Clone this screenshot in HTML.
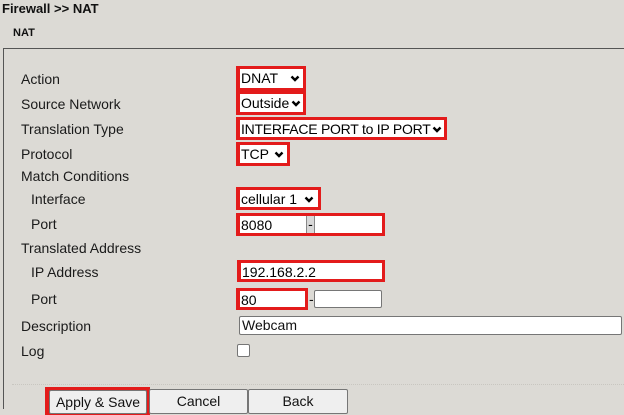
<!DOCTYPE html>
<html style="overflow:hidden;height:415px"><head><style>
body{margin:0;width:624px;height:415px;background:#dcdad5;font-family:"Liberation Sans",Arial,sans-serif;position:relative;overflow:hidden;color:#111}
.a{position:absolute;white-space:nowrap}
.l{font-size:14px;color:#1a1a1a}
.r{position:absolute;background:#e31b1b}
.r>div{position:absolute;left:4px;top:3px;right:3px;bottom:3px;background:#fff;font-size:14px;line-height:18px;padding-left:1px;color:#000;white-space:nowrap;overflow:hidden}
.ch{position:absolute;right:2px;top:6px;width:10px;height:7px;background:#fff}
.btn{position:absolute;background:#efefef;border:1px solid #767676;border-radius:2px;font-size:14px;text-align:center;line-height:22px;box-sizing:border-box}
.in{position:absolute;background:#fff;border:1px solid #767676;border-radius:2px;box-sizing:border-box;font-size:14px;line-height:16px;padding-left:2px}
</style></head><body>
<div class="a" style="left:2px;top:1px;font-size:13px;font-weight:bold">Firewall &gt;&gt; NAT</div>
<div class="a" style="left:13px;top:27px;font-size:11px;font-weight:bold">NAT</div>
<div style="position:absolute;left:3px;top:48px;width:640px;height:360px;border:1px solid #555;border-right:none;border-bottom:none"></div>
<div style="position:absolute;left:12px;top:384px;width:612px;border-top:1px dotted #c8c6c0"></div>

<div class="a l" style="left:21px;top:71px">Action</div>
<div class="a l" style="left:21px;top:96px">Source Network</div>
<div class="a l" style="left:21px;top:121px">Translation Type</div>
<div class="a l" style="left:21px;top:146px">Protocol</div>
<div class="a l" style="left:21px;top:168px">Match Conditions</div>
<div class="a l" style="left:31px;top:191px">Interface</div>
<div class="a l" style="left:31px;top:216px">Port</div>
<div class="a l" style="left:21px;top:240px">Translated Address</div>
<div class="a l" style="left:31px;top:264px">IP Address</div>
<div class="a l" style="left:31px;top:291px">Port</div>
<div class="a l" style="left:21px;top:318px">Description</div>
<div class="a l" style="left:21px;top:343px">Log</div>

<svg width="0" height="0" style="position:absolute"><defs><path id="cv" d="M1.5 1.5L5 5L8.5 1.5" fill="none" stroke="#000" stroke-width="2.4"/></defs></svg>

<div class="r" style="left:236px;top:66px;width:70px;height:25px"><div>DNAT<svg class="ch" viewBox="0 0 10 7" style="right:3px"><use href="#cv"/></svg></div></div>
<div class="r" style="left:236px;top:91px;width:70px;height:24px"><div>Outside<svg class="ch" viewBox="0 0 10 7"><use href="#cv"/></svg></div></div>
<div class="r" style="left:236px;top:117px;width:211px;height:23px"><div style="letter-spacing:-0.25px">INTERFACE PORT to IP PORT<svg class="ch" viewBox="0 0 10 7"><use href="#cv"/></svg></div></div>
<div class="r" style="left:236px;top:142px;width:54px;height:24px"><div>TCP<svg class="ch" viewBox="0 0 10 7" style="right:3px"><use href="#cv"/></svg></div></div>
<div class="r" style="left:236px;top:187px;width:85px;height:23px"><div>cellular 1<svg class="ch" viewBox="0 0 10 7" style="right:4px"><use href="#cv"/></svg></div></div>
<div class="r" style="left:236px;top:213px;width:149px;height:23px"><div>8080<span style="position:absolute;left:66px;top:0;bottom:0;width:7px;background:#d8d8d8;border-left:1px solid #888;border-right:1px solid #888;text-align:center;line-height:17px">-</span></div></div>
<div class="r" style="left:237px;top:260px;width:148px;height:22px"><div>192.168.2.2</div></div>
<div class="r" style="left:236px;top:288px;width:72px;height:22px"><div>80</div></div>
<div class="a" style="left:309px;top:291px;font-size:14px">-</div>
<div class="in" style="left:314px;top:290px;width:68px;height:18px"></div>
<div class="in" style="left:239px;top:316px;width:383px;height:19px">Webcam</div>
<div class="in" style="left:237px;top:344px;width:13px;height:13px;border-radius:2px"></div>

<div class="r" style="left:45px;top:387px;width:105px;height:28px"></div>
<div class="btn" style="left:49px;top:390px;width:98px;height:24px">Apply &amp; Save</div>
<div class="btn" style="left:149px;top:389px;width:99px;height:25px">Cancel</div>
<div class="btn" style="left:248px;top:389px;width:100px;height:25px">Back</div>
</body></html>
